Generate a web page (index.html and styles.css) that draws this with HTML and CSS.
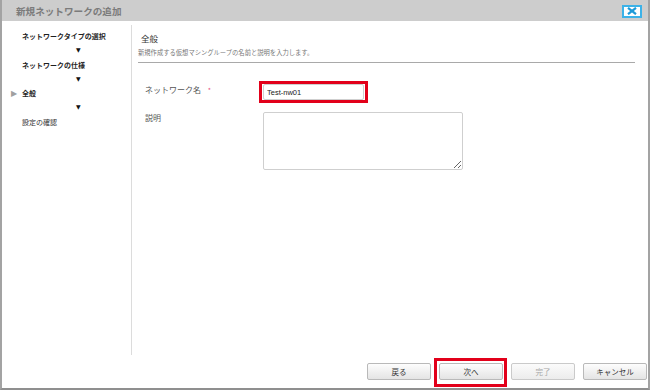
FILE: index.html
```html
<!DOCTYPE html>
<html lang="ja">
<head>
    <meta charset="UTF-8">
    <title>新規ネットワークの追加</title>
    <link rel="stylesheet" href="styles.css">
</head>
<body>
    <div class="dialog">
        <div class="titlebar">
            <span class="title">新規ネットワークの追加</span>
            <button class="close-btn" aria-label="閉じる">
                <svg width="12" height="8" viewBox="0 0 12 8">
                    <path d="M2 0.8 L10 7.2 M10 0.8 L2 7.2" stroke="#1f9ad8" stroke-width="2.2" fill="none"/>
                </svg>
            </button>
        </div>

        <div class="main">
            <ul class="steps">
                <li class="step done">ネットワークタイプの選択</li>
                <li class="arrow">▼</li>
                <li class="step done">ネットワークの仕様</li>
                <li class="arrow">▼</li>
                <li class="step current"><span class="marker">▶</span>全般</li>
                <li class="arrow">▼</li>
                <li class="step">設定の確認</li>
            </ul>

            <div class="content">
                <div class="section-head">
                    <h2>全般</h2>
                    <p>新規作成する仮想マシングループの名前と説明を入力します。</p>
                </div>

                <div class="form">
                    <div class="form-row">
                        <label class="label">ネットワーク名 <span class="req">*</span></label>
                        <div class="mark-box">
                            <input type="text" class="text-input" value="Test-nw01">
                        </div>
                    </div>
                    <div class="form-row">
                        <label class="label">説明</label>
                        <textarea class="text-area"></textarea>
                    </div>
                </div>
            </div>
        </div>

        <div class="footer">
            <button class="btn">戻る</button>
            <button class="btn marked">次へ<span class="mark-outline"></span></button>
            <button class="btn" disabled>完了</button>
            <button class="btn">キャンセル</button>
        </div>
    </div>
</body>
</html>
```

FILE: styles.css
```css
:root {
    --jp: "Noto Sans CJK JP", "Noto Sans", sans-serif;
    --mark: #e2001a;
    --border: #a3a3a3;
}

* {
    margin: 0;
    padding: 0;
    box-sizing: border-box;
}

body {
    font-family: var(--jp);
    background-color: #fff;
    color: #333;
    width: 651px;
    height: 391px;
    overflow: hidden;
}

.dialog {
    width: 650px;
    height: 390px;
    display: flex;
    flex-direction: column;
    border-left: 2px solid var(--border);
    border-right: 2px solid var(--border);
    border-bottom: 2px solid #8f8f8f;
}

.titlebar {
    height: 21px;
    background-color: #cdcdcd;
    display: flex;
    align-items: center;
    justify-content: space-between;
    padding: 0 6px 0 14px;
}

.title {
    font-size: 9.6px;
    font-weight: 700;
    color: #7b7b7b;
    line-height: 12px;
    padding-top: 1px;
}

.close-btn {
    width: 20px;
    height: 13px;
    background-color: #fff;
    border: 2px solid #3cb2e8;
    display: flex;
    align-items: center;
    justify-content: center;
    margin-top: 1px;
}

.main {
    flex: 1;
    display: flex;
    padding-top: 4px;
}

.steps {
    width: 130px;
    list-style: none;
    border-right: 1px solid #dcdcdc;
    padding-top: 4px;
}

.steps li {
    line-height: 14.3px;
    height: 14.3px;
    font-size: 7px;
}

.step {
    padding-left: 20px;
    color: #333;
}

.step.done,
.step.current {
    font-weight: 700;
    color: #1e1e1e;
}

.marker {
    display: inline-block;
    width: 10px;
    margin-left: -11px;
    margin-right: 1px;
    color: #a0a0a0;
    font-family: "DejaVu Sans", sans-serif;
    font-size: 8px;
}

.steps .arrow {
    padding-left: 74px;
    font-family: "DejaVu Sans", sans-serif;
    font-size: 6px;
    color: #111;
}

.content {
    flex: 1;
    padding: 4px 13px 0 6px;
}

.section-head {
    border-bottom: 1px solid #a9a9a9;
    padding-bottom: 4px;
}

.section-head h2 {
    font-size: 8.5px;
    font-weight: 400;
    line-height: 12px;
    padding: 3px 0 0 3px;
    color: #333;
}

.section-head p {
    font-size: 6.3px;
    line-height: 10px;
    margin-top: 4px;
    color: #777;
}

.form {
    margin-top: 18px;
    padding-left: 7px;
    display: flex;
    flex-direction: column;
    gap: 9px;
}

.form-row {
    display: flex;
    align-items: flex-start;
}

.label {
    width: 114px;
    font-size: 8px;
    line-height: 12px;
    padding-top: 3px;
    color: #555;
}

.form-row:nth-child(2) .label {
    padding-top: 0;
}

.req {
    color: #e8527e;
    font-size: 7px;
    margin-left: 5px;
}

.mark-box {
    border: 3px solid var(--mark);
    padding: 0 1px;
}

.text-input {
    display: block;
    width: 101px;
    height: 16px;
    border: 1px solid #cfcfcf;
    border-radius: 2px;
    padding: 0 3px;
    font-family: "Liberation Sans", sans-serif;
    font-size: 7.5px;
    color: #222;
    outline: none;
}

.text-area {
    display: block;
    width: 200px;
    height: 58px;
    margin-left: 4px;
    border: 1px solid #cfcfcf;
    border-radius: 2px;
    resize: both;
    outline: none;
}

.footer {
    height: 33px;
    display: flex;
    justify-content: flex-end;
    align-items: flex-start;
    gap: 8px;
    padding: 8px 1px 0 0;
}

.btn {
    position: relative;
    width: 64px;
    height: 17px;
    border: 1px solid #b9b9b9;
    border-radius: 2px;
    background: linear-gradient(#fdfdfd, #e4e4e4);
    font-family: var(--jp);
    font-size: 7.5px;
    color: #333;
}

.btn:disabled {
    color: #a8a8a8;
    background: linear-gradient(#fbfbfb, #ececec);
    border-color: #cacaca;
}

.mark-outline {
    position: absolute;
    top: -6px;
    left: -6px;
    right: -5px;
    bottom: -8px;
    border: 3px solid var(--mark);
}
```
